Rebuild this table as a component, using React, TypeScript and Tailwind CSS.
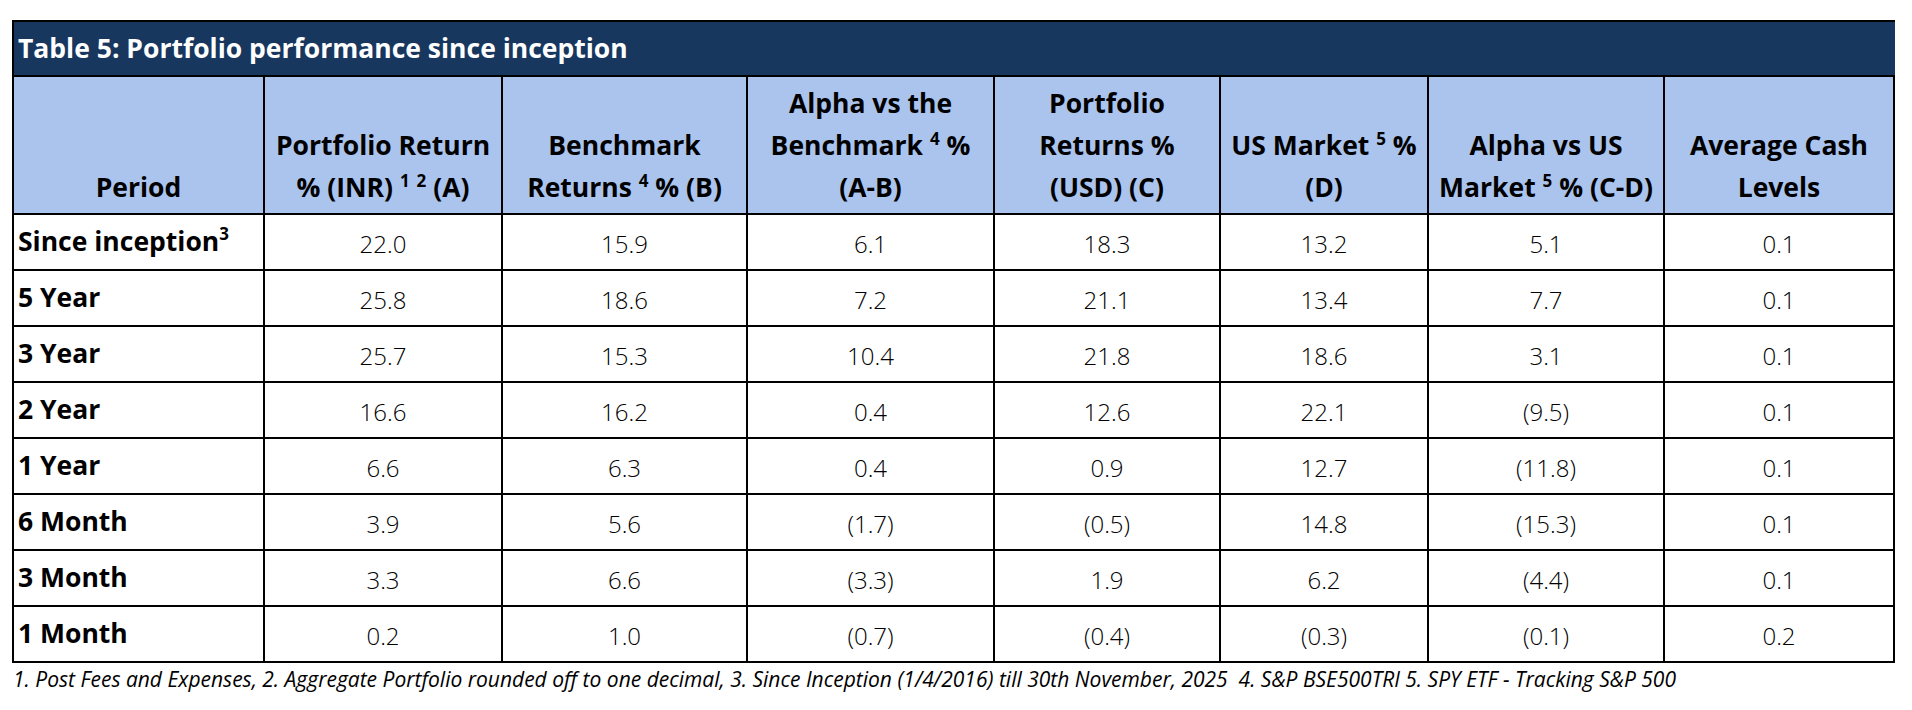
const COLS = [
  "w-[251px]",
  "w-[238px]",
  "w-[245px]",
  "w-[247px]",
  "w-[226px]",
  "w-[208px]",
  "w-[236px]",
  "w-[230px]",
];

type Row = { period: string; sup?: string; values: string[] };

const ROWS: Row[] = [
  { period: "Since inception", sup: "3", values: ["22.0", "15.9", "6.1", "18.3", "13.2", "5.1", "0.1"] },
  { period: "5 Year", values: ["25.8", "18.6", "7.2", "21.1", "13.4", "7.7", "0.1"] },
  { period: "3 Year", values: ["25.7", "15.3", "10.4", "21.8", "18.6", "3.1", "0.1"] },
  { period: "2 Year", values: ["16.6", "16.2", "0.4", "12.6", "22.1", "(9.5)", "0.1"] },
  { period: "1 Year", values: ["6.6", "6.3", "0.4", "0.9", "12.7", "(11.8)", "0.1"] },
  { period: "6 Month", values: ["3.9", "5.6", "(1.7)", "(0.5)", "14.8", "(15.3)", "0.1"] },
  { period: "3 Month", values: ["3.3", "6.6", "(3.3)", "1.9", "6.2", "(4.4)", "0.1"] },
  { period: "1 Month", values: ["0.2", "1.0", "(0.7)", "(0.4)", "(0.3)", "(0.1)", "0.2"] },
];

function Sup({ children }: { children: React.ReactNode }) {
  return <sup className="text-[17px] -top-[0.6em]">{children}</sup>;
}

const HEADERS: React.ReactNode[] = [
  <>Period</>,
  <>
    Portfolio Return
    <br />% (INR) <Sup>1</Sup> <Sup>2</Sup> (A)
  </>,
  <>
    Benchmark
    <br />
    Returns <Sup>4</Sup> % (B)
  </>,
  <>
    Alpha vs the
    <br />
    Benchmark <Sup>4</Sup> %
    <br />
    (A-B)
  </>,
  <>
    Portfolio
    <br />
    Returns %
    <br />
    (USD) (C)
  </>,
  <>
    US Market <Sup>5</Sup> %
    <br />
    (D)
  </>,
  <>
    Alpha vs US
    <br />
    Market <Sup>5</Sup> % (C-D)
  </>,
  <>
    Average Cash
    <br />
    Levels
  </>,
];

export default function App() {
  return (
    <div className="min-h-[710px] bg-white pl-3 pt-5 font-['Open_Sans',sans-serif] text-black">
      <div className="w-[1883px]">
        {/* Title bar */}
        <div className="flex h-[57px] items-center border-t-2 border-b-2 border-l-2 border-black bg-[#18375f] pl-1 text-[26.5px] font-bold text-white">
          Table 5: Portfolio performance since inception
        </div>

        {/* Column headings */}
        <div className="flex h-[138px] border-l-2 border-black bg-[#aac4ee]">
          {HEADERS.map((h, i) => (
            <div
              key={i}
              className={`${COLS[i]} flex shrink-0 items-end justify-center border-r-2 border-b-2 border-black pb-[5px] text-center text-[26.5px] leading-[42px] font-bold`}
            >
              <div>{h}</div>
            </div>
          ))}
        </div>

        {/* Data rows */}
        {ROWS.map((row) => (
          <div key={row.period} className="flex h-[56px] border-l-2 border-black">
            <div className={`${COLS[0]} flex shrink-0 items-center border-r-2 border-b-2 border-black pl-1 text-[26.5px] font-bold`}>
              <span>
                {row.period}
                {row.sup && <sup className="text-[17px] -top-[0.65em]">{row.sup}</sup>}
              </span>
            </div>
            {row.values.map((v, i) => (
              <div
                key={i}
                className={`${COLS[i + 1]} flex shrink-0 items-center justify-center border-r-2 border-b-2 border-black pt-[3px] text-[24px] font-[350]`}
              >
                {v}
              </div>
            ))}
          </div>
        ))}
      </div>

      <p className="pt-[3px] pl-px text-[21px] leading-[26px] italic">
        1. Post Fees and Expenses, 2. Aggregate Portfolio rounded off to one decimal, 3. Since Inception (1/4/2016) till 30th November, 2025&nbsp; 4. S&amp;P BSE500TRI 5. SPY ETF - Tracking S&amp;P 500
      </p>
    </div>
  );
}
